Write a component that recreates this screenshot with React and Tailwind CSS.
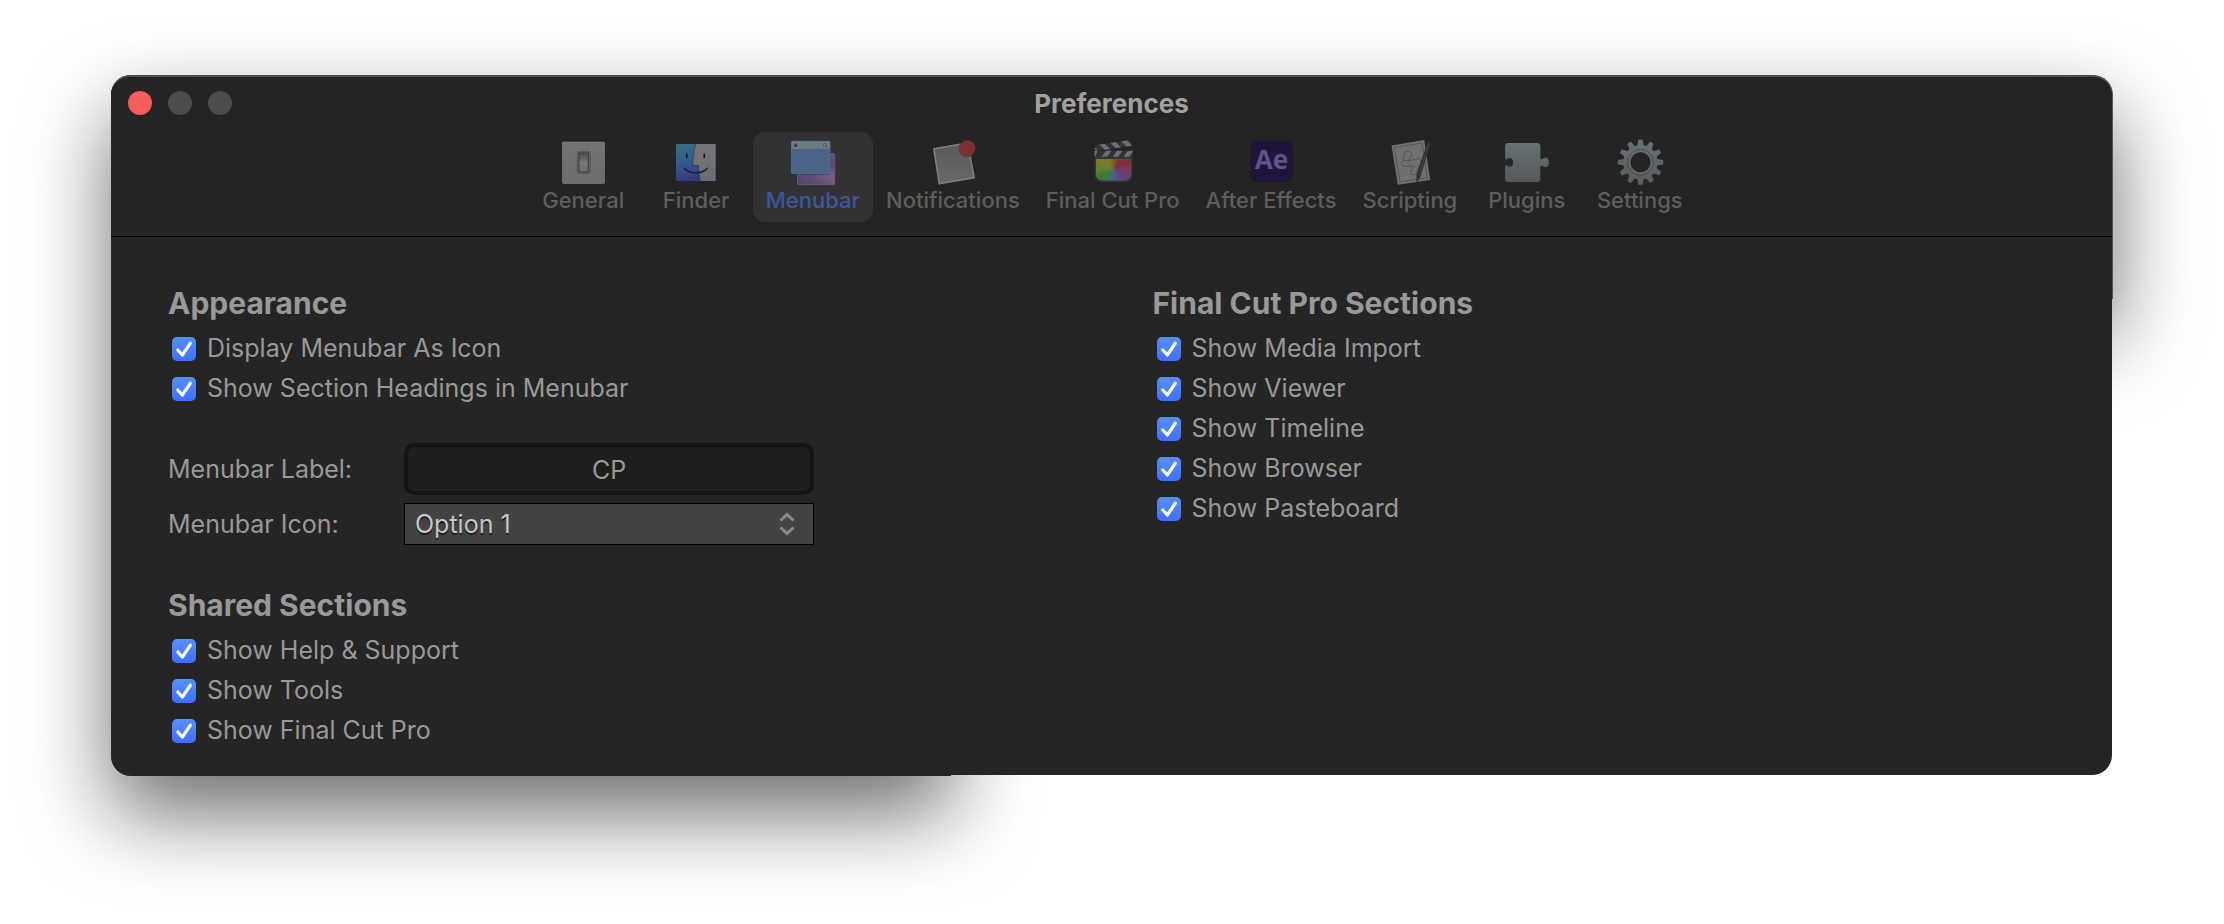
import { useState } from "react";

function GeneralIcon() {
  return (
    <svg viewBox="0 0 48 48" className="size-12" aria-hidden="true">
      <defs>
        <linearGradient id="gen-plate" x1="0" y1="0" x2="0" y2="1">
          <stop offset="0" stopColor="#747575" />
          <stop offset="1" stopColor="#6b6c6c" />
        </linearGradient>
        <linearGradient id="gen-switch" x1="0" y1="0" x2="0" y2="1">
          <stop offset="0" stopColor="#505050" />
          <stop offset="0.35" stopColor="#626262" />
          <stop offset="0.45" stopColor="#787878" />
          <stop offset="1" stopColor="#6c6c6c" />
        </linearGradient>
      </defs>
      <rect x="3.5" y="4" width="42" height="41.5" rx="1" fill="url(#gen-plate)" stroke="#858585" strokeWidth="0.6" />
      <rect x="18" y="13.5" width="13.5" height="22" rx="1.5" fill="#606161" stroke="#585858" strokeWidth="0.7" />
      <rect x="19.9" y="15" width="9.4" height="19" fill="url(#gen-switch)" stroke="#383838" strokeWidth="0.9" />
    </svg>
  );
}

function FinderIcon() {
  return (
    <svg viewBox="0 0 48 48" className="size-12" aria-hidden="true">
      <defs>
        <linearGradient id="fin-blue" x1="0" y1="0" x2="0.2" y2="1">
          <stop offset="0" stopColor="#367083" />
          <stop offset="0.55" stopColor="#33588c" />
          <stop offset="1" stopColor="#323b7c" />
        </linearGradient>
        <linearGradient id="fin-grey" x1="0" y1="0" x2="0" y2="1">
          <stop offset="0" stopColor="#767778" />
          <stop offset="1" stopColor="#6a6d74" />
        </linearGradient>
      </defs>
      <rect x="4" y="6" width="39.6" height="37" rx="1" fill="url(#fin-blue)" />
      <path d="M24 6H42.6a1 1 0 0 1 1 1V42a1 1 0 0 1-1 1H28.3C27.6 40 27.3 37 27.2 33.7 26.9 31 26.5 29 26.4 27.6H20.7C20.9 20 21.8 12 24 6Z" fill="url(#fin-grey)" />
      <path d="M24 6C21.8 12 20.9 20 20.7 27.6H26.4C26.6 33 27 38.500 28.3 43" fill="none" stroke="#22304a" strokeWidth="0.6" />
      <path d="M14.800 16V19.300M32.300 16V19.300" stroke="#151a25" strokeWidth="1.700" strokeLinecap="round" />
      <path d="M12.200 30.200C18 36.300 29.500 36.500 35.300 30.200" fill="none" stroke="#15192a" strokeWidth="1.300" strokeLinecap="round" />
    </svg>
  );
}

function MenubarIcon() {
  return (
    <svg viewBox="0 0 48 48" className="size-12" aria-hidden="true">
      <defs>
        <linearGradient id="mb-back" x1="0" y1="1" x2="1" y2="0">
          <stop offset="0" stopColor="#4c4a68" />
          <stop offset="0.3" stopColor="#5f4d72" />
          <stop offset="0.6" stopColor="#7d5b80" />
          <stop offset="0.8" stopColor="#56467a" />
          <stop offset="1" stopColor="#6a4d7c" />
        </linearGradient>
      </defs>
      <rect x="8.500" y="15.500" width="37.200" height="31" rx="1" fill="url(#mb-back)" stroke="#7b5c8c" strokeWidth="0.700" />
      <rect x="2.200" y="3.800" width="39.200" height="33" rx="1" fill="#1c2028" opacity="0.5" />
      <rect x="2.500" y="3.200" width="38.500" height="32.500" rx="1" fill="#4a6488" stroke="#567fa6" strokeWidth="0.600" />
      <path d="M2.500 4.200a1 1 0 0 1 1-1H40a1 1 0 0 1 1 1V11H2.500Z" fill="#6d7b84" />
      <ellipse cx="6.600" cy="7.600" rx="1.600" ry="1.500" fill="#2e3438" />
      <path d="M6.700 6 7.500 4.900" stroke="#2e3438" strokeWidth="0.700" />
      <circle cx="35.800" cy="7" r="1.700" fill="none" stroke="#47525a" strokeWidth="0.700" />
      <path d="M37 8.300 38.500 9.800" stroke="#47525a" strokeWidth="0.800" />
    </svg>
  );
}

function NotificationsIcon() {
  return (
    <svg viewBox="0 0 48 48" className="size-12" aria-hidden="true">
      <defs>
        <linearGradient id="not-card" x1="0" y1="0" x2="0" y2="1">
          <stop offset="0" stopColor="#5a5a5a" />
          <stop offset="1" stopColor="#686868" />
        </linearGradient>
      </defs>
      <path d="M4.800 10.800 38.500 5 45.300 39.800 10.200 45.800Z" fill="url(#not-card)" stroke="#7f7f7f" strokeWidth="1.500" strokeLinejoin="round" />
      <circle cx="38.300" cy="10.500" r="8.700" fill="#3c3030" opacity="0.5" />
      <circle cx="38.300" cy="10.300" r="8" fill="#7d2f31" />
    </svg>
  );
}

function FinalCutIcon() {
  return (
    <svg viewBox="0 0 48 48" className="size-12" aria-hidden="true">
      <defs>
        <clipPath id="fcp-screen">
          <path d="M7.200 21.300H41.600V36.500a5.800 5.800 0 0 1-5.800 5.800H13a5.800 5.800 0 0 1-5.800-5.800Z" />
        </clipPath>
        <clipPath id="fcp-bar">
          <rect x="5.500" y="12.700" width="38.500" height="6" />
        </clipPath>
        <clipPath id="fcp-arm">
          <path d="M6 12.500V9.500Q6.500 7.500 9 6.700L38 2.400Q42 2 43 6V7.800L12 12.500Z" />
        </clipPath>
        <filter id="fcp-soft" x="-20%" y="-20%" width="140%" height="140%">
          <feGaussianBlur stdDeviation="1.800" />
        </filter>
      </defs>
      <path d="M5 12.500H44V36.500a8 8 0 0 1-8 8H13a8 8 0 0 1-8-8Z" fill="#34363c" stroke="#1b1c20" strokeWidth="0.600" />
      <g clipPath="url(#fcp-arm)">
        <rect x="4" y="0" width="42" height="14" fill="#303238" />
        <path d="M9 5 16 12H22L15 5ZM20 3.500 27 10.500H33L26 3ZM31 2 38 9H44L37 1ZM4 9 8 14H10L5 8Z" fill="#6d6e72" />
      </g>
      <g clipPath="url(#fcp-bar)">
        <rect x="5" y="12" width="40" height="7" fill="#303238" />
        <path d="M9 12H4V19H6ZM12.500 19 17.500 12H23L18 19ZM23.500 19 28.500 12H34L29 19ZM34.500 19 39.500 12H45L40 19Z" fill="#6d6e72" />
      </g>
      <g clipPath="url(#fcp-screen)">
        <rect x="7" y="21" width="35" height="22" fill="#77773a" />
        <g filter="url(#fcp-soft)">
          <path d="M24 31 0 28V12H26Z" fill="#7b7a2e" />
          <path d="M24 31 22 12H34Z" fill="#82562c" />
          <path d="M24 31 32 12H52V26Z" fill="#7c2e30" />
          <path d="M24 31 52 25V36Z" fill="#7a3462" />
          <path d="M24 31 52 35V52H36Z" fill="#664075" />
          <path d="M24 31 38 52H22Z" fill="#455c92" />
          <path d="M24 31 24 52H12Z" fill="#3d6b70" />
          <path d="M24 31 14 52H0V36Z" fill="#3b7a35" />
          <path d="M24 31 0 38V27Z" fill="#607b2e" />
        </g>
      </g>
    </svg>
  );
}

function AfterEffectsIcon() {
  return (
    <svg viewBox="0 0 48 48" className="size-12" aria-hidden="true">
      <rect x="3.500" y="3.500" width="42" height="41" rx="7" fill="#17171b" opacity="0.600" />
      <rect x="3.500" y="2.700" width="42" height="40.600" rx="7" fill="#1f1439" />
      <text x="24.500" y="31.300" textAnchor="middle" fontSize="26" className="fill-[#5f5488] font-['Open_Sans',sans-serif] font-bold">
        Ae
      </text>
    </svg>
  );
}

function ScriptingIcon() {
  return (
    <svg viewBox="0 0 48 48" className="size-12" aria-hidden="true">
      <path d="M5.500 7.400 38.200 2 44.200 42 11.800 46.700Z" fill="#707070" />
      <path d="M8.200 9.600 36 5 41.400 39.800 14 43.800Z" fill="none" stroke="#4a4a4a" strokeWidth="0.700" />
      <path d="M16.500 22 19 14.500a3.600 3.600 0 0 1 6.500 3L22 23 32 20.500C35 20.500 35 24 34 26L31 34a3.300 3.300 0 1 1-4-3.500C29 29 28 28 26 28L20 28.500C15 28.500 14.500 24 17 22.500L22 23" fill="none" stroke="#4a4a4a" strokeWidth="0.800" />
      <path d="M43.900 3 44.200 6.200 34.600 38.500 30.600 44.500 30.400 37.200 41 5.500Z" fill="#2e3234" />
      <path d="M42.600 6.500 33 37" stroke="#4a5054" strokeWidth="0.700" />
    </svg>
  );
}

function PluginsIcon() {
  return (
    <svg viewBox="0 0 48 48" className="size-12" aria-hidden="true">
      <defs>
        <linearGradient id="plug-fill" x1="0" y1="0" x2="0" y2="1">
          <stop offset="0" stopColor="#687072" />
          <stop offset="1" stopColor="#545959" />
        </linearGradient>
      </defs>
      <path
        d="M5.500 5H34a3.400 3.400 0 0 1 3.400 3.400V20.500C38.500 21.500 39.500 21.300 40.500 20.300C42.800 18.300 46 20 46 24.400C46 28.800 42.800 30.500 40.500 28.500C39.500 27.500 38.500 27.300 37.400 28.300V40.600A3.400 3.400 0 0 1 34 44H5.500A3.400 3.400 0 0 1 2.100 40.600V27.600C3.200 26.800 4 27.300 4.700 28C7 30 10.300 28.200 10.300 24.400C10.300 20.600 7 18.800 4.700 20.800C4 21.500 3.200 22 2.100 21.200V8.400A3.400 3.400 0 0 1 5.500 5Z"
        fill="url(#plug-fill)"
      />
    </svg>
  );
}

const teeth = [0, 30, 60, 90, 120, 150, 180, 210, 240, 270, 300, 330];

function SettingsIcon() {
  return (
    <svg viewBox="0 0 48 48" className="size-12" aria-hidden="true">
      <defs>
        <linearGradient id="gear-fill" gradientUnits="userSpaceOnUse" x1="0" y1="1" x2="0" y2="47">
          <stop offset="0" stopColor="#687174" />
          <stop offset="1" stopColor="#575b5b" />
        </linearGradient>
        <mask id="gear-mask">
          <circle cx="24.500" cy="24.300" r="17.300" fill="white" />
          {teeth.map((angle) => (
            <path key={angle} d="M21.300 8.500 22.300 1.800Q24.500 1 26.700 1.800L27.700 8.500Z" fill="white" transform={`rotate(${angle} 24.500 24.300)`} />
          ))}
          <circle cx="24.500" cy="24.300" r="10.200" fill="black" />
        </mask>
      </defs>
      <rect width="48" height="48" fill="url(#gear-fill)" mask="url(#gear-mask)" />
      <circle cx="24.500" cy="24.300" r="13" fill="none" stroke="#454a4b" strokeWidth="0.900" />
      <circle cx="24.500" cy="24.300" r="10.700" fill="none" stroke="#6b7071" strokeWidth="0.700" />
    </svg>
  );
}

const tabs = [
  { label: "General", Icon: GeneralIcon },
  { label: "Finder", Icon: FinderIcon },
  { label: "Menubar", Icon: MenubarIcon },
  { label: "Notifications", Icon: NotificationsIcon },
  { label: "Final Cut Pro", Icon: FinalCutIcon },
  { label: "After Effects", Icon: AfterEffectsIcon },
  { label: "Scripting", Icon: ScriptingIcon },
  { label: "Plugins", Icon: PluginsIcon },
  { label: "Settings", Icon: SettingsIcon },
];

function CheckRow({ label }) {
  return (
    <label className="flex h-10 items-center gap-[11px] pl-1">
      <span className="grid size-6 shrink-0">
        <input
          type="checkbox"
          defaultChecked
          className="peer col-start-1 row-start-1 size-6 appearance-none rounded-[5px] bg-[#3a3a3a] checked:bg-linear-to-b checked:from-[#5590fd] checked:to-[#406ff9]"
        />
        <svg
          viewBox="0 0 24 24"
          className="pointer-events-none invisible col-start-1 row-start-1 size-6 peer-checked:visible"
          fill="none"
          stroke="white"
          strokeWidth="3.200"
          strokeLinecap="round"
          strokeLinejoin="round"
          aria-hidden="true"
        >
          <path d="M5.800 13 10.300 18 18.300 6.300" />
        </svg>
      </span>
      <span>{label}</span>
    </label>
  );
}

function Section({ title, items, className }) {
  return (
    <section className={className}>
      <h2 className="mb-2 text-[30px] leading-9 font-bold">{title}</h2>
      {items.map((item) => (
        <CheckRow key={item} label={item} />
      ))}
    </section>
  );
}

export default function App() {
  const [active, setActive] = useState("Menubar");

  return (
    <div className="min-h-screen overflow-hidden bg-white pt-[75px] pr-28 pb-[148px] pl-[111px] font-[Inter,sans-serif] text-[25px] text-[#999999]">
      <div className="relative">
        <div className="absolute inset-0 drop-shadow-[0_38px_42px_rgba(0,0,0,0.57)]" aria-hidden="true">
          <div className="absolute top-0 -bottom-px left-0 w-[42%] rounded-[20px] rounded-br-none bg-[#252525]" />
          <div className="absolute top-0 -right-px left-0 h-[224px] rounded-t-[20px] bg-[#555656]" />
        </div>
        <main className="relative overflow-hidden rounded-[20px] border-t-2 border-[#4c4e4e] bg-[#252525]">
          <header className="border-b border-black bg-[#242424] pb-3.5">
            <div className="grid h-[55px] grid-cols-[1fr_auto_1fr] items-center px-[17px] pb-[3px]">
              <div className="flex gap-4">
                <button type="button" aria-label="Close" className="size-6 rounded-full bg-[#f45d5c]" />
                <button type="button" aria-label="Minimize" className="size-6 rounded-full bg-[#4c4c4c]" />
                <button type="button" aria-label="Zoom" className="size-6 rounded-full bg-[#4c4c4c]" />
              </div>
              <h1 className="text-[26px] font-bold text-[#a0a0a0]">Preferences</h1>
            </div>
            <nav className="flex justify-center">
              {tabs.map(({ label, Icon }) => (
                <button
                  key={label}
                  type="button"
                  aria-pressed={active === label}
                  onClick={() => setActive(label)}
                  className="flex h-[90px] min-w-[113px] flex-col items-center rounded-xl px-[13px] pt-1.5 text-[22px] leading-7 font-medium text-[#5e5e5e] aria-pressed:bg-[#323232] aria-pressed:text-[#4055a0]"
                >
                  <Icon />
                  <span>{label}</span>
                </button>
              ))}
            </nav>
          </header>

          <div className="grid grid-cols-2 pt-12 pb-6">
            <div className="pl-[57px]">
              <Section title="Appearance" items={["Display Menubar As Icon", "Show Section Headings in Menubar"]} />

              <div className="mt-[34px] grid grid-cols-[236px_410px] items-center gap-y-2">
                <label htmlFor="menubar-label" className="pt-0.5">
                  Menubar Label:
                </label>
                <input
                  id="menubar-label"
                  type="text"
                  defaultValue="CP"
                  className="h-[52px] w-full rounded-[10px] border-4 border-[#141414] bg-[#1e1e1e] pt-0.5 text-center outline-none"
                />
                <label htmlFor="menubar-icon" className="pt-0.5">
                  Menubar Icon:
                </label>
                <div className="grid items-center">
                  <select
                    id="menubar-icon"
                    className="col-start-1 row-start-1 h-[42px] w-full appearance-none border border-black bg-[#434343] pt-0.5 pl-2.5 text-[#c6c6c2] outline-none text-shadow-[0_2px_1px_rgba(0,0,0,0.6)]"
                  >
                    <option>Option 1</option>
                    <option>Option 2</option>
                  </select>
                  <svg
                    viewBox="0 0 16 24"
                    className="pointer-events-none col-start-1 row-start-1 mr-[19px] h-6 w-4 justify-self-end"
                    fill="none"
                    stroke="#8c8c8c"
                    strokeWidth="3"
                    aria-hidden="true"
                  >
                    <path d="M1.500 8.500 8 2.500 14.500 8.500M1.500 15.500 8 21.500 14.500 15.500" />
                  </svg>
                </div>
              </div>

              <Section className="mt-[42px]" title="Shared Sections" items={["Show Help & Support", "Show Tools", "Show Final Cut Pro"]} />
            </div>

            <div className="pl-[41px]">
              <Section
                title="Final Cut Pro Sections"
                items={["Show Media Import", "Show Viewer", "Show Timeline", "Show Browser", "Show Pasteboard"]}
              />
            </div>
          </div>
        </main>
      </div>
    </div>
  );
}
